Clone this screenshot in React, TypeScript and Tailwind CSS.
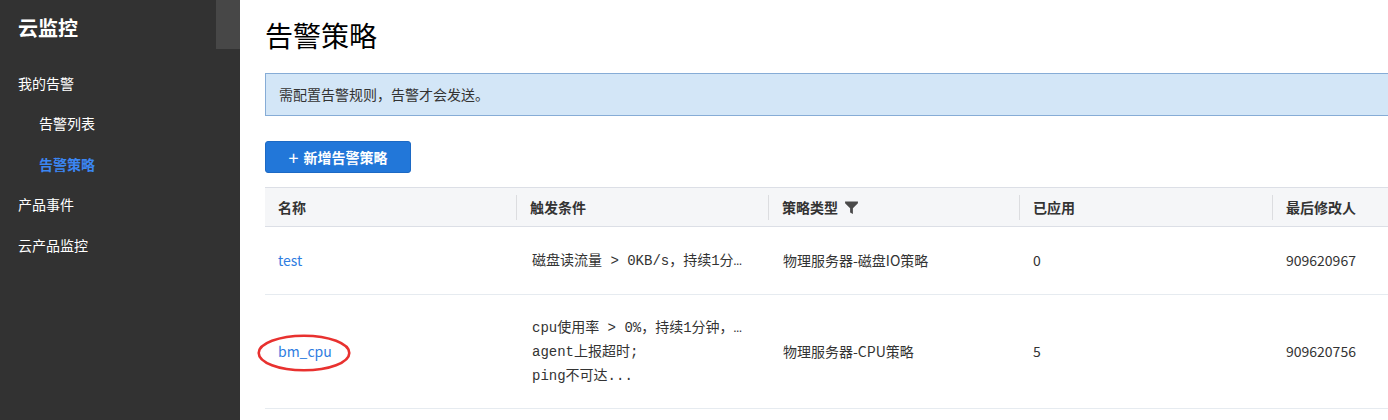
import React from "react";

const cols = [
  { key: "name", title: "名称", w: 251 },
  { key: "cond", title: "触发条件", w: 252 },
  { key: "type", title: "策略类型", w: 251, filter: true },
  { key: "applied", title: "已应用", w: 253 },
  { key: "user", title: "最后修改人", w: 252 },
];

const rows = [
  {
    name: "test",
    cond: ["磁盘读流量 > 0KB/s，持续1分…"],
    type: "物理服务器-磁盘IO策略",
    applied: "0",
    user: "909620967",
    h: "h-[68px]",
  },
  {
    name: "bm_cpu",
    cond: ["cpu使用率 > 0%，持续1分钟，…", "agent上报超时;", "ping不可达..."],
    type: "物理服务器-CPU策略",
    applied: "5",
    user: "909620756",
    h: "h-[114px]",
    circled: true,
  },
];

const FilterIcon: React.FC = () => (
  <svg width="15" height="15" viewBox="0 0 14 14" className="ml-[6px] mt-[1px]">
    <path d="M1 1.5h12v1.6L8.3 7.6V13L5.7 11.6V7.6L1 3.1z" fill="#4a4a4a" />
  </svg>
);

const App: React.FC = () => {
  return (
    <div
      className="flex w-[1388px] h-[420px] overflow-hidden bg-white text-[14px] text-[#333]"
      style={{ fontFamily: '"Microsoft YaHei", "Noto Sans CJK SC", sans-serif' }}
    >
      {/* Sidebar */}
      <aside className="w-[240px] shrink-0 bg-[#323232] flex">
        <div className="flex-1 flex flex-col">
          <h1 className="pl-[18px] pt-[13px] h-[49px] text-[20px] font-bold text-white leading-[30px]">
            云监控
          </h1>
          <nav className="flex flex-col mt-[14px] text-white">
            <div className="pl-[18px] h-[40px] leading-[40px]">我的告警</div>
            <div className="pl-[39px] h-[41px] leading-[41px]">告警列表</div>
            <div className="pl-[39px] h-[40px] leading-[40px] font-bold text-[#3b86f2]">告警策略</div>
            <div className="pl-[18px] h-[41px] leading-[41px]">产品事件</div>
            <div className="pl-[18px] h-[41px] leading-[41px]">云产品监控</div>
          </nav>
        </div>
        <div className="w-[24px] h-[49px] bg-[#474747]"></div>
      </aside>

      {/* Main */}
      <main className="flex-1 pl-[25px] min-w-0">
        <h2 className="pt-[14px] h-[73px] text-[28px] leading-[42px] text-black">告警策略</h2>

        <div className="w-[1200px] h-[43px] border border-[#86acd6] bg-[#d3e6f7] pl-[13px] leading-[41px] text-[#333]">
          需配置告警规则，告警才会发送。
        </div>

        <button className="mt-[25px] w-[146px] h-[32px] rounded-[3px] bg-[#2277d9] border border-[#1c69c4] text-white text-[14px] font-bold flex items-center justify-center gap-[5px]">
          <span className="text-[18px] font-normal leading-none">+</span>
          <span>新增告警策略</span>
        </button>

        <div className="mt-[14px] w-[1400px] border-t border-[#dcdfe6]">
          {/* Header */}
          <div className="flex h-[39px] bg-[#f5f6f8] border-b border-[#dcdfe6]">
            {cols.map((c, i) => (
              <div key={c.key} className="flex items-center" style={{ width: c.w }}>
                {i > 0 && <div className="w-px h-[25px] bg-[#dcdde0]"></div>}
                <div className="flex items-center pl-[13px] font-bold text-[#333]">
                  {c.title}
                  {c.filter && <FilterIcon />}
                </div>
              </div>
            ))}
          </div>

          {/* Rows */}
          {rows.map((r) => (
            <div key={r.name} className={`flex ${r.h} border-b border-[#e6ebf0]`}>
              <div className="relative flex items-center pl-[13px]" style={{ width: cols[0].w }}>
                <span className="text-[#2f7de1]">{r.name}</span>
                {r.circled && (
                  <svg
                    className="absolute left-[-8px] top-[39px]"
                    width="94"
                    height="38"
                    viewBox="0 0 94 38"
                  >
                    <ellipse cx="47" cy="19" rx="45.3" ry="17.3" fill="none" stroke="#e8312f" strokeWidth="2.6" />
                  </svg>
                )}
              </div>
              <div
                className="flex flex-col justify-center pl-[16px] leading-[24px] text-[#333]"
                style={{ width: cols[1].w, fontFamily: '"Liberation Mono", "Noto Sans CJK SC", monospace' }}
              >
                {r.cond.map((l) => (
                  <div key={l} className="whitespace-nowrap">{l}</div>
                ))}
              </div>
              <div className="flex items-center pl-[15px]" style={{ width: cols[2].w }}>
                {r.type}
              </div>
              <div className="flex items-center pl-[14px]" style={{ width: cols[3].w }}>
                {r.applied}
              </div>
              <div className="flex items-center pl-[14px]" style={{ width: cols[4].w }}>
                {r.user}
              </div>
            </div>
          ))}
        </div>
      </main>
    </div>
  );
};

export default App;
